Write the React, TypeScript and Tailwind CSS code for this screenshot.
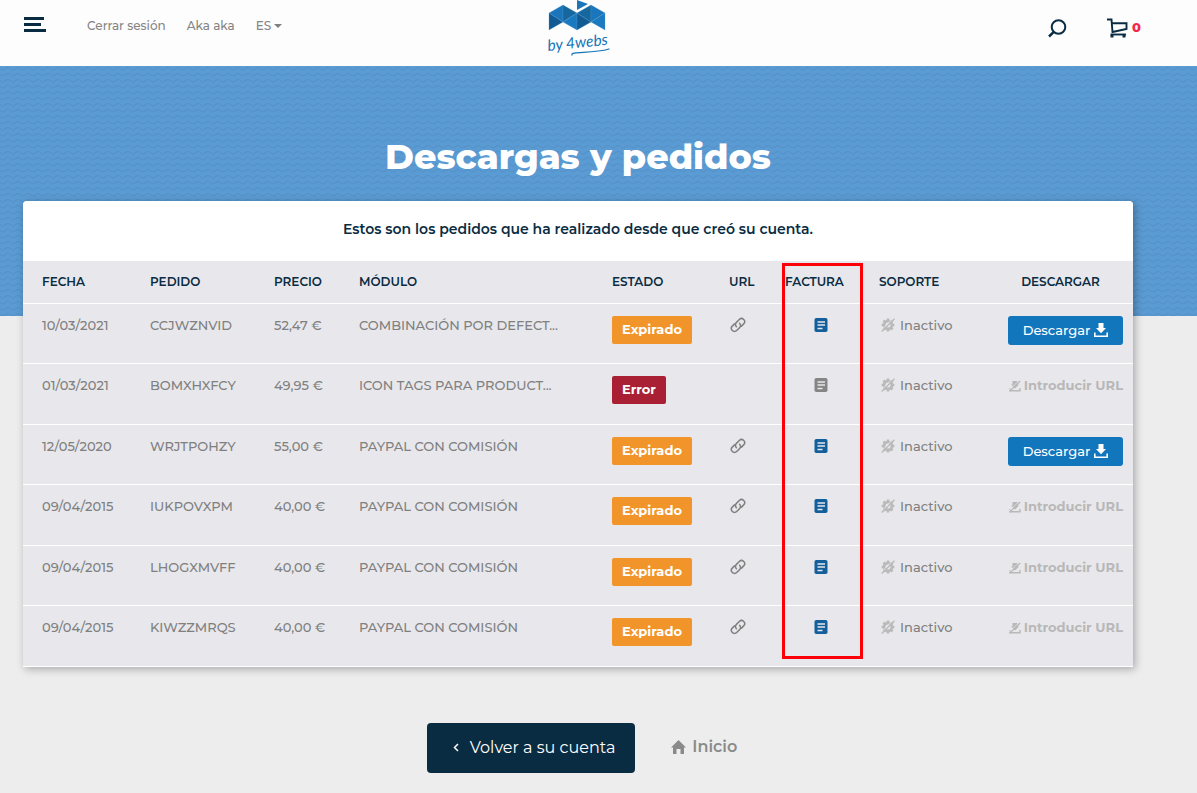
import React from 'react';

type Status = 'Expirado' | 'Error';

interface Order {
  date: string;
  reference: string;
  price: string;
  product: string;
  status: Status;
  downloadable: boolean;
}

const orders: Order[] = [
  { date: '10/03/2021', reference: 'CCJWZNVID', price: '52,47 €', product: 'COMBINACIÓN POR DEFECT...', status: 'Expirado', downloadable: true },
  { date: '01/03/2021', reference: 'BOMXHXFCY', price: '49,95 €', product: 'ICON TAGS PARA PRODUCT...', status: 'Error', downloadable: false },
  { date: '12/05/2020', reference: 'WRJTPOHZY', price: '55,00 €', product: 'PAYPAL CON COMISIÓN', status: 'Expirado', downloadable: true },
  { date: '09/04/2015', reference: 'IUKPOVXPM', price: '40,00 €', product: 'PAYPAL CON COMISIÓN', status: 'Expirado', downloadable: false },
  { date: '09/04/2015', reference: 'LHOGXMVFF', price: '40,00 €', product: 'PAYPAL CON COMISIÓN', status: 'Expirado', downloadable: false },
  { date: '09/04/2015', reference: 'KIWZZMRQS', price: '40,00 €', product: 'PAYPAL CON COMISIÓN', status: 'Expirado', downloadable: false },
];

const Logo = () => (
  <svg width="66" height="58" viewBox="0 0 66 58" role="img" aria-label="by 4webs">
    <g stroke="#4f97cd" strokeWidth="0.3">
      <path d="M3 13 L17 5 V22 Z" fill="#1b75bb" />
      <path d="M3 13 L17 22 L3 30 Z" fill="#125a94" />
      <path d="M17 5 L31 13 L17 22 Z" fill="#17679f" />
      <path d="M17 22 L31 13 V30 Z" fill="#1b79c0" />
      <path d="M31 13 L45 22 L31 30 Z" fill="#125a94" />
      <path d="M31 13 L45 5 V22 Z" fill="#17679f" />
      <path d="M45 5 L59 13 L45 22 Z" fill="#1b75bb" />
      <path d="M45 22 L59 13 V30 Z" fill="#1b79c0" />
    </g>
    <path d="M31 0 L42 4 L31 10 Z" fill="#1b75bb" />
    <text x="2" y="51" transform="rotate(-6 2 51)" fill="#1574ba" fontSize="15.5" fontStyle="italic" fontFamily="Lato, sans-serif">
      by 4webs
    </text>
    <path d="M26 55 C24 51 46 54 63 49" fill="none" stroke="#1574ba" strokeWidth="1.3" strokeLinecap="round" />
  </svg>
);

const LinkIcon = () => (
  <svg width="16" height="16" viewBox="0 0 16 16" fill="none" stroke="#808080" strokeWidth="1.5" strokeLinecap="round">
    <path d="M6.4 9.8a3.1 3.1 0 0 1 0-4.4l2.9-2.9a3.1 3.1 0 0 1 4.4 4.4l-2.2 2.2" />
    <path d="M9.6 6.2a3.1 3.1 0 0 1 0 4.4l-2.9 2.9a3.1 3.1 0 0 1-4.4-4.4l2.2-2.2" />
  </svg>
);

const InvoiceIcon = ({ color }: { color: string }) => (
  <svg width="14" height="14" viewBox="0 0 14 14">
    <rect x="0.5" width="13" height="14" rx="1.8" fill={color} />
    <path d="M3.5 4h7.5M3.5 7h7.5M3.5 10.5h5" stroke="#e8e8ec" strokeWidth="1.4" />
  </svg>
);

const SupportIcon = () => (
  <svg width="14" height="14" viewBox="0 0 14 14">
    <g stroke="#bababa" strokeWidth="2.6">
      <path d="M7 .6V13.4M.6 7H13.4M2.5 2.5 11.5 11.5M11.5 2.5 2.5 11.5" />
    </g>
    <circle cx="7" cy="7" r="3.9" fill="#e8e8ec" stroke="#bababa" strokeWidth="2.8" />
    <path d="M12.3 .2 L.2 12.3" stroke="#e8e8ec" strokeWidth="1" />
    <path d="M13.5 .7 L.7 13.5" stroke="#bababa" strokeWidth="1.4" />
  </svg>
);

const DownloadIcon = () => (
  <svg width="14" height="14" viewBox="0 0 14 14">
    <path d="M4.5 0h5v5H12L7 10.2 2 5h2.5z" fill="#fff" />
    <path d="M.8 9.5v3.7h12.4V9.5" fill="none" stroke="#fff" strokeWidth="1.6" />
  </svg>
);

const NoDownloadIcon = () => (
  <svg width="12" height="14" viewBox="0 0 12 14">
    <path d="M3.5 3h5v3.5H10L6 10.5 2 6.5h1.5z" fill="#b8b8b8" />
    <path d="M1 10v2.8h10V10" fill="none" stroke="#b8b8b8" strokeWidth="1.4" />
    <path d="M10.2 2.5 L0 12" stroke="#e8e8ec" strokeWidth=".8" />
    <path d="M11.2 3 L.6 13.3" stroke="#b8b8b8" strokeWidth="1.2" />
  </svg>
);

const WavePattern = () => (
  <svg className="absolute inset-0 h-full w-full" aria-hidden="true">
    <defs>
      <pattern id="waves" width="10" height="6" patternUnits="userSpaceOnUse">
        <path d="M0 2 Q2.5 5 5 3 Q7.5 1 10 2" fill="none" stroke="#4b87be" strokeWidth="1.1" opacity="0.5" />
      </pattern>
    </defs>
    <rect width="100%" height="100%" fill="url(#waves)" />
  </svg>
);

const Header = () => (
  <header className="flex h-[66px] items-start justify-between bg-[#fdfdfd] pr-16 pl-6">
    <nav className="flex flex-1 items-center pt-3.5 text-xs leading-5 font-medium text-[#858585]">
      <button type="button" aria-label="Menú" className="mr-10">
        <svg width="23" height="16" viewBox="0 0 23 16" fill="#0a2c42">
          <path d="M0 0h20v3H0zM0 6h17v3H0zM0 12h22v3H0z" />
        </svg>
      </button>
      <div className="flex gap-[21px] pt-0.5">
        <a href="#logout">Cerrar sesión</a>
        <a href="#account">Aka aka</a>
        <button type="button" className="flex items-center gap-[3px]">
          ES
          <svg width="8" height="4" viewBox="0 0 8 4" fill="#808080">
            <path d="M0 0h8L4 4z" />
          </svg>
        </button>
      </div>
    </nav>
    <a href="#home">
      <Logo />
    </a>
    <div className="flex flex-1 items-center justify-end pt-[18px]">
      <button type="button" aria-label="Buscar" className="mr-10">
        <svg width="19" height="19" viewBox="0 0 19 19" fill="none" stroke="#0a2c42" strokeWidth="2">
          <circle cx="10.5" cy="8" r="6.8" />
          <path d="M5.8 12.8 L1 17.5" strokeWidth="2.5" />
        </svg>
      </button>
      <a href="#cart" className="-mr-2 flex items-center gap-1 text-[13px] font-extrabold text-[#f4274b]">
        <svg width="21" height="20" viewBox="0 0 21 20" fill="none" stroke="#0a2c42" strokeWidth="1.9">
          <path d="M0 1.5h4.5l1 12.5L19.5 11V5.3H5" />
          <path d="M3.5 16.5h15.5" />
          <path d="M3.5 18.3h3M15.5 18.3h3" strokeWidth="2.4" />
        </svg>
        0
      </a>
    </div>
  </header>
);

const statusColors: Record<Status, string> = {
  Expirado: 'bg-[#f1952b]',
  Error: 'bg-[#a91f33]',
};

const OrderRow = ({ order }: { order: Order }) => (
  <tr className="h-[60px] border-b border-white align-top even:h-[61px]">
    <td className="pt-3 pl-[19px]">{order.date}</td>
    <td className="pt-3 pl-2.5">{order.reference}</td>
    <td className="pt-3 pl-2.5">{order.price}</td>
    <td className="truncate pt-3 pl-2.5">{order.product}</td>
    <td className="pt-3 pl-2.5">
      <span className={`inline-block rounded-xs px-2.5 pt-1 pb-1.5 font-bold text-white ${statusColors[order.status]}`}>
        {order.status}
      </span>
    </td>
    <td className="pt-3 pl-[11px]">
      {order.status !== 'Error' && (
        <a href="#url" aria-label="URL" className="inline-block pt-px">
          <LinkIcon />
        </a>
      )}
    </td>
    <td className="pt-3.5">
      <a href="#invoice" aria-label="Factura" className="flex justify-center">
        <InvoiceIcon color={order.status === 'Error' ? '#858585' : '#125f9c'} />
      </a>
    </td>
    <td className="pt-3 pl-[13px]">
      <span className="flex items-center gap-[5px]">
        <SupportIcon />
        Inactivo
      </span>
    </td>
    <td className="pt-3 pr-2.5">
      {order.downloadable ? (
        <button type="button" className="ml-auto flex h-[29px] w-[115px] items-center justify-center gap-1 rounded-[3px] bg-[#1276bc] text-white">
          Descargar
          <DownloadIcon />
        </button>
      ) : (
        <a href="#add-url" className="flex items-center justify-end gap-[3px] font-bold whitespace-nowrap text-[#b8b8b8]">
          <NoDownloadIcon />
          Introducir URL
        </a>
      )}
    </td>
  </tr>
);

const App: React.FC = () => {
  return (
    <div className="min-h-screen bg-[#ededed] font-['Montserrat','Inter',sans-serif]">
      <Header />
      <main>
        <section className="relative h-[250px] bg-[#5b9bd3] pt-[67px] pr-16 pl-[23px]">
          <WavePattern />
          <h1 className="relative text-center text-[35px] leading-[48px] font-extrabold text-white">Descargas y pedidos</h1>
        </section>
        <div className="relative -mt-[115px] pr-16 pl-[23px]">
          <div className="relative rounded-t bg-[#e8e8ec] shadow-[2px_2px_8px_rgba(0,0,0,0.3)]">
            <p className="rounded-t bg-white pt-4 pb-5 text-center text-sm leading-6 font-semibold text-[#0a2c42]">
              Estos son los pedidos que ha realizado desde que creó su cuenta.
            </p>
            <table className="w-full table-fixed border-collapse text-left text-[13px] leading-[18px] font-medium text-[#808080]">
              <colgroup>
                <col className="w-[117px]" />
                <col className="w-[124px]" />
                <col className="w-[85px]" />
                <col />
                <col className="w-[117px]" />
                <col className="w-[55px]" />
                <col className="w-[94px]" />
                <col className="w-[130px]" />
                <col className="w-[135px]" />
              </colgroup>
              <thead>
                <tr className="h-[42px] border-b border-white text-xs text-[#0a2c42] [&>th]:font-semibold">
                  <th className="pl-[19px]">FECHA</th>
                  <th className="pl-2.5">PEDIDO</th>
                  <th className="pl-2.5">PRECIO</th>
                  <th className="pl-2.5">MÓDULO</th>
                  <th className="pl-2.5">ESTADO</th>
                  <th className="pl-2.5">URL</th>
                  <th className="pl-[11px]">FACTURA</th>
                  <th className="pl-[11px]">SOPORTE</th>
                  <th className="pr-2.5 text-center">DESCARGAR</th>
                </tr>
              </thead>
              <tbody>
                {orders.map((order) => (
                  <OrderRow key={order.reference} order={order} />
                ))}
              </tbody>
            </table>
            <div className="pointer-events-none absolute top-[62px] right-[270px] bottom-2 w-[81px] border-3 border-[#fb0007]" />
          </div>
          <div className="flex items-center justify-center gap-9 pt-14 pb-5 pl-2">
            <a href="#account" className="flex h-[50px] items-center gap-2.5 rounded bg-[#0a2c42] pr-5 pl-[26px] text-base text-white">
              <svg width="7" height="9" viewBox="0 0 7 9" fill="none" stroke="#fff" strokeWidth="1.5">
                <path d="M5 1 L1.5 4.5 L5 8" />
              </svg>
              Volver a su cuenta
            </a>
            <a href="#home" className="flex items-center gap-1.5 pb-0.5 text-base font-semibold text-[#8a8a8a]">
              <svg width="15" height="14" viewBox="0 0 15 14" fill="#8a8a8a">
                <path d="M7.5 0 L15 7.5H13V14H9.5V9H5.5V14H2V7.5H0z" />
              </svg>
              Inicio
            </a>
          </div>
        </div>
      </main>
    </div>
  );
};

export default App;
